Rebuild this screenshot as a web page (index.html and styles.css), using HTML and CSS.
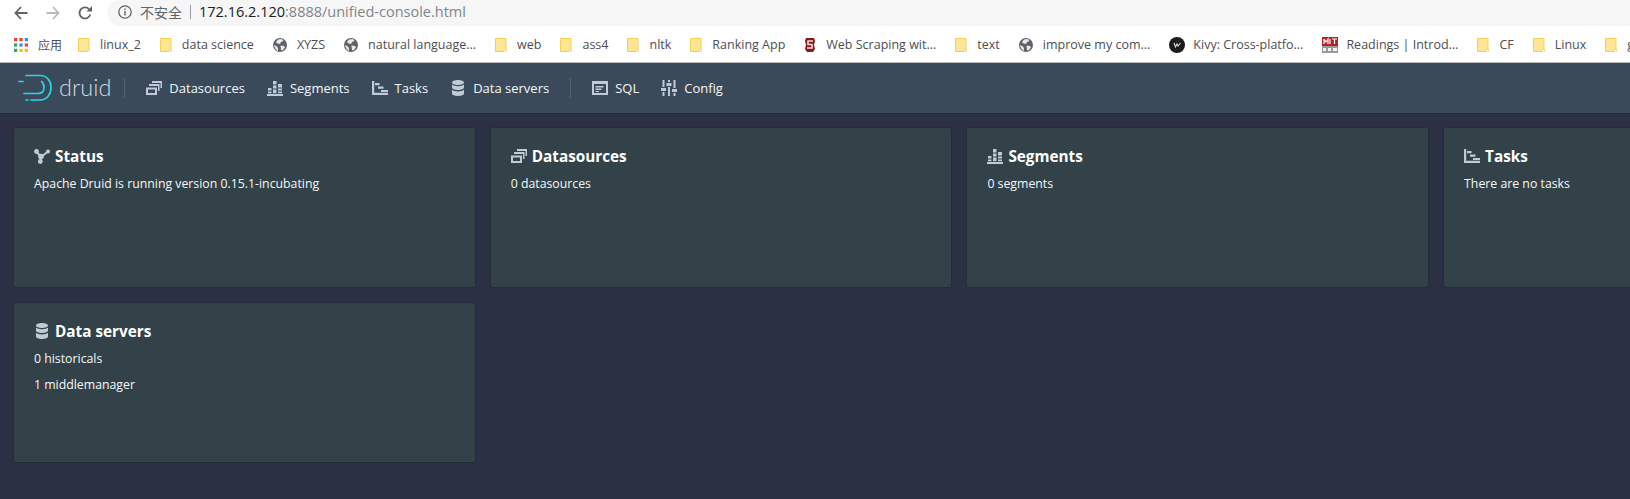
FILE: index.html
```html
<!DOCTYPE html>
<html lang="en">
<head>
    <meta charset="UTF-8">
    <title>Apache Druid</title>
    <link rel="stylesheet" href="styles.css">
</head>
<body>
    <svg class="defs" width="0" height="0">
        <symbol id="i-multi" viewBox="0 0 16 16">
            <path d="M0 7.500h11V15H0zM2 9.500V13h7V9.500z" fill-rule="evenodd"/>
            <path d="M3 4h10.500v7H12V6H3z"/>
            <path d="M6 1h10v7h-1.500V3H6z"/>
        </symbol>
        <symbol id="i-segments" viewBox="0 0 16 16">
            <path d="M0 14h16v2H0zM1 8h3.500v2.500H1zM1 11.500h3.500v1.700H1zM6 1h3.500v3.500H6zM6 5.500h3.500v3H6zM6 9.500h3.500v3.700H6zM11 4h4v3.500h-4zM11 8.500h4v2h-4zM11 11.500h4v1.700h-4z"/>
        </symbol>
        <symbol id="i-tasks" viewBox="0 0 16 16">
            <path d="M0 1h2.200v11.800H16V15H0z"/>
            <path d="M3 3h4.500v2.200H3zM6 6.500h5.500v2.200H6zM9 10h7v2H9z"/>
        </symbol>
        <symbol id="i-db" viewBox="0 0 16 16">
            <path d="M8 0c3.300 0 6 1 6 2.500S11.300 5 8 5 2 4 2 2.500 4.700 0 8 0zM2 4.600C3.200 5.700 5.500 6.300 8 6.300s4.800-.6 6-1.700v3c0 1.400-2.700 2.500-6 2.500s-6-1.100-6-2.500zM2 9.800c1.200 1.100 3.500 1.700 6 1.700s4.800-.6 6-1.700v3.700c0 1.400-2.700 2.500-6 2.500s-6-1.100-6-2.500z"/>
        </symbol>
        <symbol id="i-sql" viewBox="0 0 16 16">
            <path fill-rule="evenodd" d="M0 1h16v14H0zM2 4v9h12V4z"/>
            <path d="M3.500 6h8v1.500h-8zM3.500 8.500h6V10h-6zM3.500 11h3.500v1h-3.500z"/>
        </symbol>
        <symbol id="i-config" viewBox="0 0 16 16">
            <path d="M1.500 0h2v7h-2zM0 8h5v3H0zM1.500 12h2v4h-2zM7 0h2v2H7zM5.500 3h5v3h-5zM7 7h2v9H7zM12.500 0h2v8h-2zM11 9h5v3h-5zM12.500 13h2v3h-2z"/>
        </symbol>
        <symbol id="i-status" viewBox="0 0 16 16">
            <path d="M2.500 3.500 7 9l-.6 4.500M14 3.500 7 9" fill="none" stroke="currentColor" stroke-width="2"/>
            <circle cx="2.500" cy="3.500" r="2.400"/>
            <circle cx="14" cy="3.500" r="2"/>
            <circle cx="7" cy="8.500" r="2.800"/>
            <circle cx="6.300" cy="13.500" r="2.400"/>
        </symbol>
        <symbol id="b-folder" viewBox="0 0 12 14">
            <path d="M.5.500h10.500v11l-1.500 2H.5z" fill="#ffe594" stroke="#f5cf55"/>
            <path d="M9 11.500h2.500v2.500H9z" fill="#fff" stroke="#f5cf55" stroke-width=".8"/>
        </symbol>
        <symbol id="b-globe" viewBox="0 0 14 14">
            <circle cx="7" cy="7" r="7" fill="#5f6368"/>
            <path d="M5 1.500 9 1l1.500 2-2.500 1-1 2-2.500-.5L3 4zM7.500 7.500l3.500.5 1 1.500-2.500 3-1.500-.5zM1 7l3 1.500 1 2v2.500C3 12 1.500 10 1 7z" fill="#e8eaed"/>
        </symbol>
    </svg>

    <div class="chrome-bar">
        <svg class="chrome-btn" viewBox="0 0 14 14"><path d="M13.500 7H2M7 1 1.500 7 7 13" fill="none" stroke="#5f6368" stroke-width="1.800"/></svg>
        <svg class="chrome-btn" viewBox="0 0 14 14"><path d="M.5 7H12M7 1l5.500 6L7 13" fill="none" stroke="#b8babd" stroke-width="1.800"/></svg>
        <svg class="chrome-btn" viewBox="0 0 14 14"><path d="M12.300 8.500A5.500 5.500 0 1 1 11 3.100" fill="none" stroke="#5f6368" stroke-width="1.800"/><path d="M8.500 5.500H14V0z" fill="#5f6368"/></svg>
        <div class="omnibox">
            <svg class="info-icon" viewBox="0 0 14 14"><circle cx="7" cy="7" r="6.200" fill="none" stroke="#5f6368" stroke-width="1.300"/><path d="M6.300 6h1.400v4.500H6.300zM6.300 3.400h1.400v1.400H6.300z" fill="#5f6368"/></svg>
            <span class="not-secure">不安全</span>
            <span class="omni-sep"></span>
            <span class="url"><span class="url-host">172.16.2.120</span>:8888/unified-console.html</span>
        </div>
    </div>

    <div class="bookmarks">
        <a class="bm bm-apps">
            <svg class="bm-icon" viewBox="0 0 13 13">
                <path fill="#ea4335" d="M0 0h3v3H0z"/><path fill="#ea4335" d="M5 0h3v3H5z"/><path fill="#4285f4" d="M10 0h3v3h-3z"/>
                <path fill="#34a853" d="M0 5h3v3H0z"/><path fill="#4285f4" d="M5 5h3v3H5z"/><path fill="#ea4335" d="M10 5h3v3h-3z"/>
                <path fill="#34a853" d="M0 10h3v3H0z"/><path fill="#fbbc05" d="M5 10h3v3H5z"/><path fill="#fbbc05" d="M10 10h3v3h-3z"/>
            </svg>
            <span>应用</span>
        </a>
        <a class="bm"><svg class="bm-folder"><use href="#b-folder"/></svg><span>linux_2</span></a>
        <a class="bm"><svg class="bm-folder"><use href="#b-folder"/></svg><span>data science</span></a>
        <a class="bm"><svg class="bm-icon"><use href="#b-globe"/></svg><span>XYZS</span></a>
        <a class="bm"><svg class="bm-icon"><use href="#b-globe"/></svg><span>natural language...</span></a>
        <a class="bm"><svg class="bm-folder"><use href="#b-folder"/></svg><span>web</span></a>
        <a class="bm"><svg class="bm-folder"><use href="#b-folder"/></svg><span>ass4</span></a>
        <a class="bm"><svg class="bm-folder"><use href="#b-folder"/></svg><span>nltk</span></a>
        <a class="bm"><svg class="bm-folder"><use href="#b-folder"/></svg><span>Ranking App</span></a>
        <a class="bm">
            <svg class="bm-folder" viewBox="0 0 12 14"><path d="M2 0h8l1 3-1 4 1 4-2 3H3l-2-3 1-4-1-4z" fill="#8c1515"/><path d="M9 3H4v3.500h4V10H3" fill="none" stroke="#e9dcdc" stroke-width="1.600"/></svg>
            <span>Web Scraping wit...</span>
        </a>
        <a class="bm"><svg class="bm-folder"><use href="#b-folder"/></svg><span>text</span></a>
        <a class="bm"><svg class="bm-icon"><use href="#b-globe"/></svg><span>improve my com...</span></a>
        <a class="bm bm-wide">
            <svg class="bm-kivy" viewBox="0 0 16 16"><circle cx="8" cy="8" r="8" fill="#1c1c1c"/><path d="M5 6l1.500 4L8 7l1 2 2.500-3" fill="none" stroke="#ddd" stroke-width="1.100"/></svg>
            <span>Kivy: Cross-platfo...</span>
        </a>
        <a class="bm bm-wide">
            <svg class="bm-kivy" viewBox="0 0 16 16"><path d="M0 0h16v9H0z" fill="#b5202c"/><path d="M0 9h16v7H0z" fill="#9a9a98"/><path d="M2 2v5M2 2l2 3 2-3v5M8 2v5M10 2h5M12.500 2v5" fill="none" stroke="#fff" stroke-width="1.200"/><path d="M1 11h3v3H1zM6 11h3v3H6zM11 11h4v3h-4z" fill="#f2f2f2"/></svg>
            <span>Readings | Introd...</span>
        </a>
        <a class="bm"><svg class="bm-folder"><use href="#b-folder"/></svg><span>CF</span></a>
        <a class="bm"><svg class="bm-folder"><use href="#b-folder"/></svg><span>Linux</span></a>
        <a class="bm"><svg class="bm-folder"><use href="#b-folder"/></svg><span>g</span></a>
    </div>

    <nav class="navbar">
        <div class="logo">
            <svg class="logo-mark" viewBox="0 0 36 28">
                <path d="M8 1.500h14c7 0 11 5.500 11 12s-4 12.500-11 12.500h-9M8 26H10" fill="none" stroke="#27d5e8" stroke-width="1.700" stroke-linecap="round"/>
                <path d="M1 7.500h4M6 19.500h14c4 0 6-2.500 6-6 0-2.500-1-5-2.500-6" fill="none" stroke="#27d5e8" stroke-width="1.700" stroke-linecap="round"/>
            </svg>
            <span class="logo-text">druid</span>
        </div>
        <span class="nav-divider"></span>
        <a class="nav-item"><svg class="icon"><use href="#i-multi"/></svg>Datasources</a>
        <a class="nav-item"><svg class="icon"><use href="#i-segments"/></svg>Segments</a>
        <a class="nav-item"><svg class="icon"><use href="#i-tasks"/></svg>Tasks</a>
        <a class="nav-item"><svg class="icon"><use href="#i-db"/></svg>Data servers</a>
        <span class="nav-divider"></span>
        <a class="nav-item"><svg class="icon"><use href="#i-sql"/></svg>SQL</a>
        <a class="nav-item"><svg class="icon"><use href="#i-config"/></svg>Config</a>
    </nav>

    <main class="cards">
        <section class="card">
            <h5><svg class="icon"><use href="#i-status"/></svg>Status</h5>
            <p>Apache Druid is running version 0.15.1-incubating</p>
        </section>
        <section class="card">
            <h5><svg class="icon"><use href="#i-multi"/></svg>Datasources</h5>
            <p>0 datasources</p>
        </section>
        <section class="card">
            <h5><svg class="icon"><use href="#i-segments"/></svg>Segments</h5>
            <p>0 segments</p>
        </section>
        <section class="card">
            <h5><svg class="icon"><use href="#i-tasks"/></svg>Tasks</h5>
            <p>There are no tasks</p>
        </section>
        <section class="card">
            <h5><svg class="icon"><use href="#i-db"/></svg>Data servers</h5>
            <p>0 historicals</p>
            <p>1 middlemanager</p>
        </section>
    </main>
</body>
</html>
```

FILE: styles.css
```css
html, body {
    margin: 0;
    height: 100%;
    overflow: hidden;
}
body {
    background-color: #2b3044;
    font-family: "Open Sans", sans-serif;
    color: #f5f8fa;
}
a {
    text-decoration: none;
}
.defs {
    display: block;
    height: 0;
}

/* browser chrome */
.chrome-bar {
    display: flex;
    align-items: center;
    height: 26px;
    padding-left: 14px;
    background-color: #fff;
}
.chrome-btn {
    width: 14px;
    height: 14px;
    margin-right: 18px;
    flex: none;
}
.omnibox {
    display: flex;
    align-items: center;
    flex: 1;
    box-sizing: border-box;
    height: 26px;
    margin-left: -3px;
    padding: 0 0 3px 11px;
    background-color: #f6f6f6;
    border-radius: 13px 0 0 13px;
}
.info-icon {
    width: 14px;
    height: 14px;
    margin-right: 8px;
}
.not-secure {
    font-family: "Noto Sans CJK SC", sans-serif;
    font-size: 14px;
    color: #5f6368;
}
.omni-sep {
    width: 1px;
    height: 14px;
    margin: 0 8px;
    background-color: #9aa0a6;
}
.url {
    font-family: "Open Sans", sans-serif;
    font-size: 14.500px;
    color: #80868b;
}
.url-host {
    color: #202124;
}
.bookmarks {
    display: flex;
    align-items: center;
    height: 35px;
    padding: 1px 0 0 14px;
    gap: 19px;
    background-color: #fff;
    border-bottom: 1px solid #b9bbbd;
    white-space: nowrap;
}
.bm {
    display: flex;
    align-items: center;
    gap: 10px;
    font-size: 12.500px;
    color: #4e4e52;
    flex: none;
}
.bm-wide {
    gap: 8px;
}
.bm-apps {
    margin-right: -3px;
}
.bm-apps span {
    font-family: "Noto Sans CJK SC", sans-serif;
    font-size: 12px;
}
.bm-icon {
    width: 14px;
    height: 14px;
}
.bm-folder {
    width: 12px;
    height: 14px;
}
.bm-kivy {
    width: 16px;
    height: 16px;
}

/* druid header */
.navbar {
    display: flex;
    align-items: center;
    height: 50px;
    padding-left: 18px;
    background-color: #3a4a5a;
    border-bottom: 1px solid #232a39;
}
.logo {
    display: flex;
    align-items: center;
    gap: 5px;
    margin-right: 3px;
}
.logo-mark {
    width: 36px;
    height: 28px;
}
.logo-text {
    font-family: Lato, sans-serif;
    font-weight: 300;
    font-size: 23.500px;
    color: #d4dbe2;
    line-height: 1;
}
.nav-divider {
    width: 1px;
    height: 20px;
    margin: 0 10px;
    background-color: #55636f;
}
.nav-item {
    display: flex;
    align-items: center;
    gap: 7px;
    padding: 5px 11px;
    font-size: 13px;
    color: #f5f8fa;
}
.icon {
    width: 16px;
    height: 16px;
    flex: none;
    fill: #bfccd6;
    color: #bfccd6;
}

/* home cards */
.cards {
    display: grid;
    grid-template-columns: repeat(4, 462.700px);
    grid-auto-rows: 161px;
    gap: 14px;
    padding: 13px;
}
.card {
    box-sizing: border-box;
    padding: 19px 20px;
    background-color: #334249;
    border: 1px solid #222d38;
    border-radius: 3px;
}
.card h5 {
    display: flex;
    align-items: center;
    gap: 5px;
    margin: 0 0 10px;
    font-size: 15.300px;
    font-weight: 700;
    line-height: 18px;
    color: #fff;
}
.card p {
    margin: 0 0 8px;
    font-size: 12.300px;
    line-height: 18px;
}
```
